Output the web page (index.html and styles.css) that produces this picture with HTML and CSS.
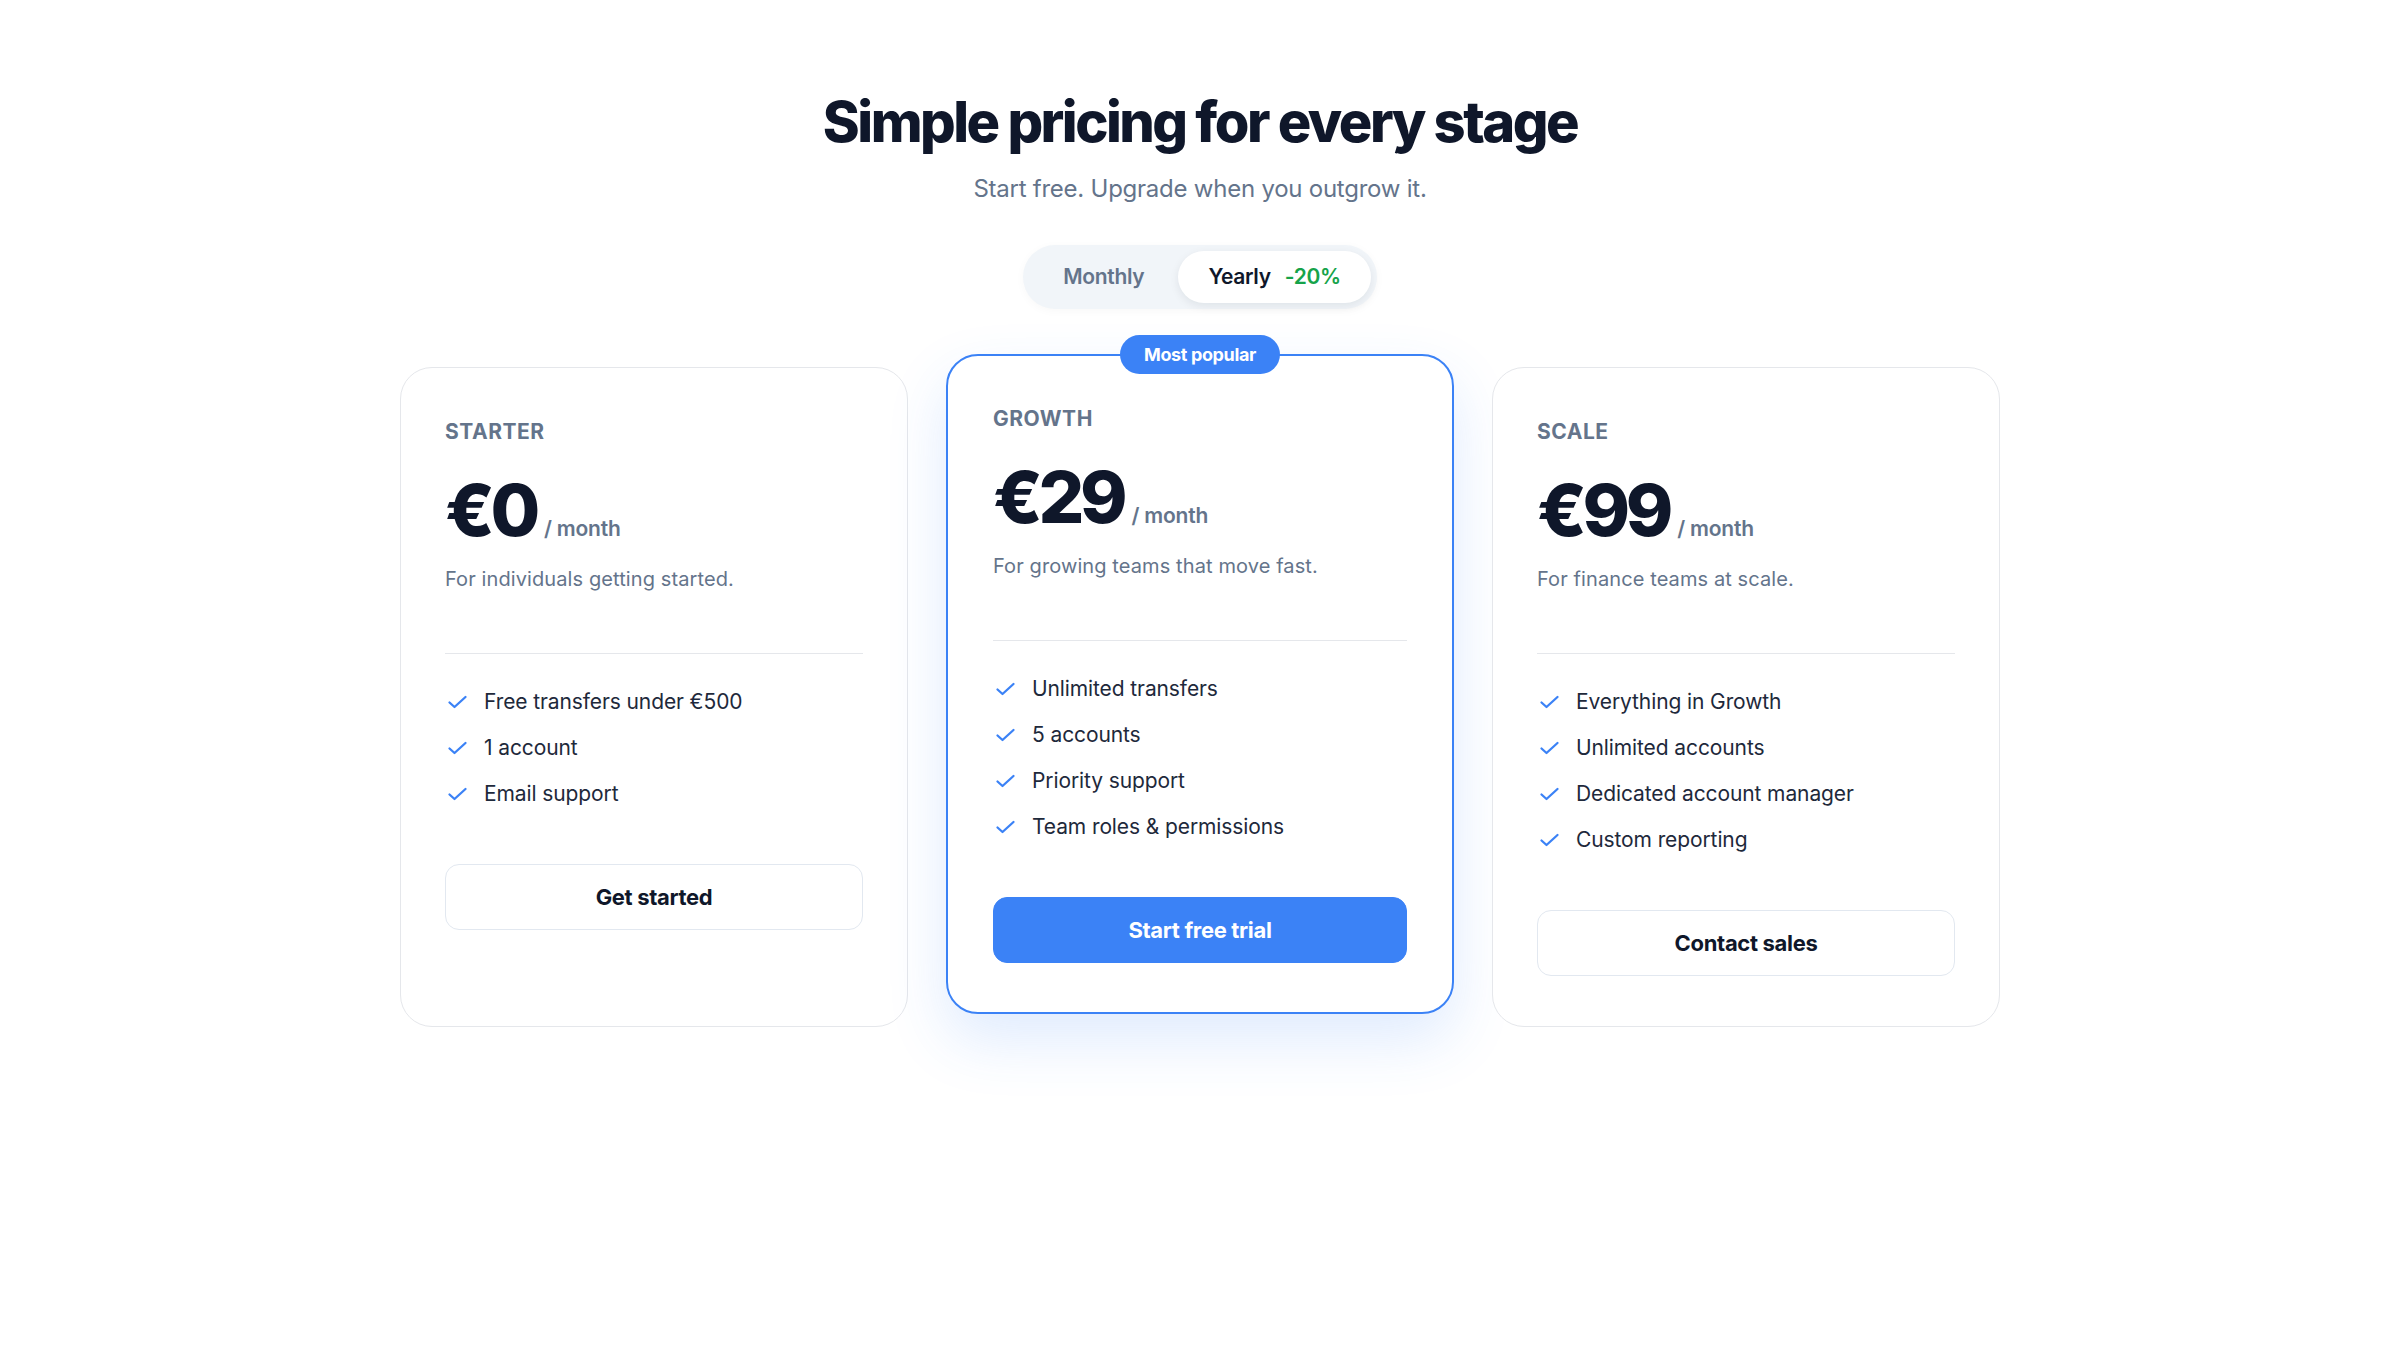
FILE: index.html
```html
<!DOCTYPE html>
<html lang="en">
<head>
    <meta charset="UTF-8">
    <meta name="viewport" content="width=device-width, initial-scale=1.0">
    <title>Pricing</title>
    <link rel="stylesheet" href="styles.css">
</head>
<body>
    <section class="pricing">
        <header class="pricing-header">
            <h1>Simple pricing for every stage</h1>
            <p class="subtitle">Start free. Upgrade when you outgrow it.</p>

            <div class="billing-toggle">
                <button class="toggle-option">Monthly</button>
                <button class="toggle-option active">Yearly <span class="discount">-20%</span></button>
            </div>
        </header>

        <div class="plans">
            <!-- Starter -->
            <div class="plan">
                <div class="plan-name">STARTER</div>
                <div class="plan-price">
                    <span class="amount">€0</span>
                    <span class="period">/ month</span>
                </div>
                <p class="plan-desc">For individuals getting started.</p>
                <ul class="features">
                    <li><svg class="check" viewBox="0 0 24 20"><path d="M4.5 10.5L9.5 15L20.5 5"/></svg>Free transfers under €500</li>
                    <li><svg class="check" viewBox="0 0 24 20"><path d="M4.5 10.5L9.5 15L20.5 5"/></svg>1 account</li>
                    <li><svg class="check" viewBox="0 0 24 20"><path d="M4.5 10.5L9.5 15L20.5 5"/></svg>Email support</li>
                </ul>
                <button class="plan-btn">Get started</button>
            </div>

            <!-- Growth -->
            <div class="plan featured">
                <span class="badge">Most popular</span>
                <div class="plan-name">GROWTH</div>
                <div class="plan-price">
                    <span class="amount">€29</span>
                    <span class="period">/ month</span>
                </div>
                <p class="plan-desc">For growing teams that move fast.</p>
                <ul class="features">
                    <li><svg class="check" viewBox="0 0 24 20"><path d="M4.5 10.5L9.5 15L20.5 5"/></svg>Unlimited transfers</li>
                    <li><svg class="check" viewBox="0 0 24 20"><path d="M4.5 10.5L9.5 15L20.5 5"/></svg>5 accounts</li>
                    <li><svg class="check" viewBox="0 0 24 20"><path d="M4.5 10.5L9.5 15L20.5 5"/></svg>Priority support</li>
                    <li><svg class="check" viewBox="0 0 24 20"><path d="M4.5 10.5L9.5 15L20.5 5"/></svg>Team roles &amp; permissions</li>
                </ul>
                <button class="plan-btn primary">Start free trial</button>
            </div>

            <!-- Scale -->
            <div class="plan">
                <div class="plan-name">SCALE</div>
                <div class="plan-price">
                    <span class="amount">€99</span>
                    <span class="period">/ month</span>
                </div>
                <p class="plan-desc">For finance teams at scale.</p>
                <ul class="features">
                    <li><svg class="check" viewBox="0 0 24 20"><path d="M4.5 10.5L9.5 15L20.5 5"/></svg>Everything in Growth</li>
                    <li><svg class="check" viewBox="0 0 24 20"><path d="M4.5 10.5L9.5 15L20.5 5"/></svg>Unlimited accounts</li>
                    <li><svg class="check" viewBox="0 0 24 20"><path d="M4.5 10.5L9.5 15L20.5 5"/></svg>Dedicated account manager</li>
                    <li><svg class="check" viewBox="0 0 24 20"><path d="M4.5 10.5L9.5 15L20.5 5"/></svg>Custom reporting</li>
                </ul>
                <button class="plan-btn">Contact sales</button>
            </div>
        </div>
    </section>
</body>
</html>
```

FILE: styles.css
```css
body {
    margin: 0;
    font-family: Inter, 'Noto Sans', sans-serif;
    background-color: #fff;
    color: #0f172a;
}
.pricing {
    max-width: 1600px;
    margin: 0 auto;
    padding: 91px 0 80px;
}
.pricing-header {
    text-align: center;
}
h1 {
    margin: 0;
    font-size: 56px;
    line-height: 1.12;
    font-weight: 800;
    letter-spacing: -0.045em;
    color: #0f172a;
}
.subtitle {
    margin: 19px 0 0;
    font-size: 24px;
    line-height: 32px;
    color: #64748b;
    letter-spacing: -0.01em;
}
.billing-toggle {
    display: inline-flex;
    margin-top: 40px;
    padding: 6px;
    border-radius: 999px;
    background-color: #f1f5f9;
    box-shadow: 0 2px 10px rgba(15, 23, 42, 0.03);
}
.toggle-option {
    height: 52px;
    padding: 0 34px;
    border: none;
    border-radius: 999px;
    background: transparent;
    font-family: inherit;
    font-size: 21px;
    font-weight: 600;
    letter-spacing: -0.015em;
    color: #64748b;
    cursor: pointer;
}
.toggle-option.active {
    padding: 0 30px;
    background-color: #fff;
    color: #0f172a;
    box-shadow: 0 3px 10px rgba(15, 23, 42, 0.08);
}
.discount {
    margin-left: 9px;
    color: #16a34a;
}
.plans {
    display: grid;
    grid-template-columns: repeat(3, 1fr);
    gap: 38px;
    margin-top: 58px;
}
.plan {
    position: relative;
    display: flex;
    flex-direction: column;
    padding: 52px 44px 50px;
    border: 1px solid #e5e7eb;
    border-radius: 32px;
    background-color: #fff;
}
.plan.featured {
    border: 2px solid #3b82f6;
    padding: 51px 45px 49px;
    transform: translateY(-13px);
    box-shadow: 0 26px 60px rgba(59, 130, 246, 0.16);
}
.badge {
    position: absolute;
    top: -21px;
    left: 50%;
    transform: translateX(-50%);
    padding: 0 24px;
    height: 39px;
    line-height: 39px;
    border-radius: 999px;
    background-color: #3b82f6;
    color: #fff;
    font-size: 18px;
    font-weight: 700;
    letter-spacing: -0.02em;
    white-space: nowrap;
}
.plan-name {
    font-size: 21px;
    line-height: 24px;
    font-weight: 700;
    letter-spacing: 0.025em;
    color: #64748b;
}
.plan-price {
    display: flex;
    align-items: baseline;
    gap: 8px;
    margin-top: 30px;
    height: 72px;
}
.amount {
    font-size: 72px;
    line-height: 72px;
    font-weight: 800;
    letter-spacing: -0.06em;
    color: #0f172a;
}
.period {
    font-size: 21px;
    font-weight: 600;
    letter-spacing: -0.01em;
    color: #64748b;
}
.plan-desc {
    margin: 19px 0 0;
    font-size: 20px;
    line-height: 28px;
    letter-spacing: 0.005em;
    color: #64748b;
}
.features {
    list-style: none;
    margin: 60px 0 0;
    padding: 34px 0 0;
    border-top: 1px solid #e5e7eb;
    display: flex;
    flex-direction: column;
    gap: 18px;
}
.features li {
    display: flex;
    align-items: center;
    gap: 15px;
    font-size: 21px;
    line-height: 28px;
    letter-spacing: -0.005em;
    color: #1e293b;
}
.check {
    width: 24px;
    height: 20px;
    flex-shrink: 0;
    fill: none;
    stroke: #3b82f6;
    stroke-width: 2.3;
    stroke-linecap: round;
    stroke-linejoin: round;
}
.plan-btn {
    margin-top: 56px;
    height: 66px;
    border: 1px solid #e2e8f0;
    border-radius: 14px;
    background-color: #fff;
    font-family: inherit;
    font-size: 22px;
    font-weight: 700;
    letter-spacing: -0.015em;
    color: #0f172a;
    cursor: pointer;
}
.plan-btn.primary {
    border-color: #3b82f6;
    background-color: #3b82f6;
    color: #fff;
}
```
